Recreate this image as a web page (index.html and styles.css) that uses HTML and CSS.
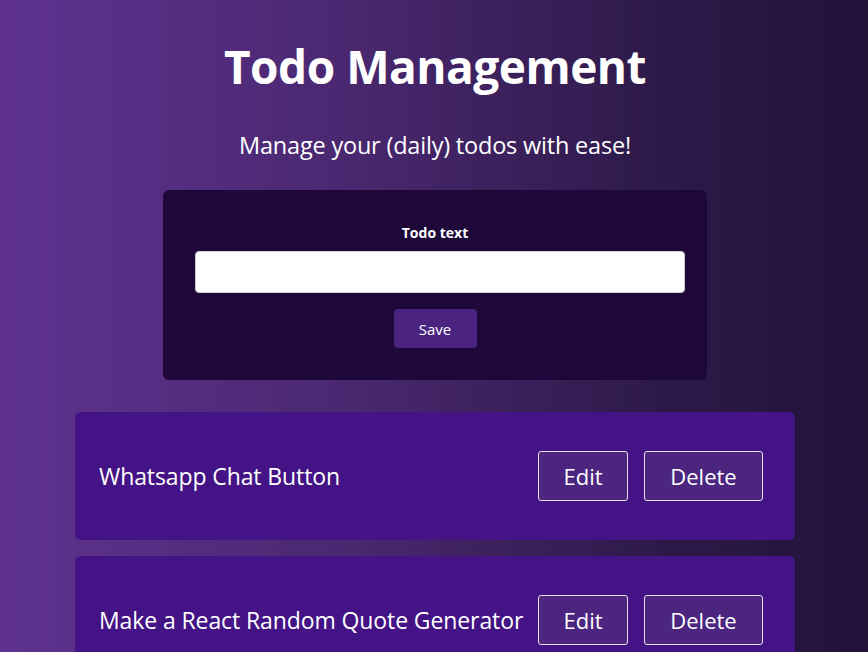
FILE: index.html
```html
<!DOCTYPE html>
<html lang="en">
<head>
<meta charset="utf-8">
<title>Todo Management</title>
<link rel="stylesheet" href="styles.css">
</head>
<body>
<header class="header">
  <h1 class="title">Todo Management</h1>
  <p class="subtitle">Manage your (daily) todos with ease!</p>
</header>
<form class="todo-form">
  <label class="form-label" for="todo-text">Todo text</label>
  <input class="form-input" id="todo-text" type="text">
  <button class="save-btn" type="button">Save</button>
</form>
<ul class="todo-list">
  <li class="todo-item">
    <span class="todo-text">Whatsapp Chat Button</span>
    <div class="todo-actions">
      <button class="action-btn edit-btn" type="button">Edit</button>
      <button class="action-btn delete-btn" type="button">Delete</button>
    </div>
  </li>
  <li class="todo-item">
    <span class="todo-text">Make a React Random Quote Generator</span>
    <div class="todo-actions">
      <button class="action-btn edit-btn" type="button">Edit</button>
      <button class="action-btn delete-btn" type="button">Delete</button>
    </div>
  </li>
</ul>
</body>
</html>
```
FILE: styles.css
```css
* { box-sizing: border-box; }
html, body { height: 100%; }
body {
  margin: 0;
  padding-left: 2px;
  font-family: "Open Sans", "Noto Sans", sans-serif;
  color: #ffffff;
  background: linear-gradient(to right, #5f3291 0%, #4a2870 40%, #2e1a4a 75%, #22123a 100%);
  background-attachment: fixed;
  overflow: hidden;
}
.header {
  text-align: center;
  padding-top: 36px;
}
.title {
  margin: 0;
  font-size: 46px;
  font-weight: 700;
  line-height: 60px;
  letter-spacing: -0.5px;
}
.subtitle {
  margin: 34px 0 0;
  font-size: 23.5px;
  line-height: 30px;
  letter-spacing: -0.2px;
}
.todo-form {
  width: 544px;
  margin: 30px auto 0;
  background: #1e0739;
  border-radius: 6px;
  padding: 34px 32px 32px;
  display: flex;
  flex-direction: column;
  align-items: center;
}
.form-label {
  font-size: 14px;
  font-weight: 700;
  line-height: 18px;
  margin-bottom: 9px;
}
.form-input {
  align-self: flex-start;
  width: 490px;
  height: 42px;
  border: 1px solid #cfcfd6;
  border-radius: 4px;
  background: #ffffff;
  font: inherit;
}
.save-btn {
  margin-top: 16px;
  width: 83px;
  height: 39px;
  border: none;
  border-radius: 4px;
  background: #4a2380;
  color: #ffffff;
  font-family: inherit;
  font-size: 15px;
}
.todo-list {
  list-style: none;
  margin: 32px auto 0;
  padding: 0;
  width: 720px;
  display: flex;
  flex-direction: column;
  gap: 16px;
}
.todo-item {
  background: #441385;
  border-radius: 6px;
  min-height: 128px;
  padding: 0 32px 0 24px;
  display: flex;
  align-items: center;
  justify-content: space-between;
}
.todo-text {
  font-size: 23px;
  letter-spacing: -0.1px;
}
.todo-actions {
  display: flex;
  gap: 16px;
}
.action-btn {
  height: 50px;
  border: 1px solid #e6e0ef;
  border-radius: 3px;
  background: #4b2580;
  color: #ffffff;
  font-family: inherit;
  font-size: 22px;
}
.edit-btn { width: 90px; }
.delete-btn { width: 119px; }
```
